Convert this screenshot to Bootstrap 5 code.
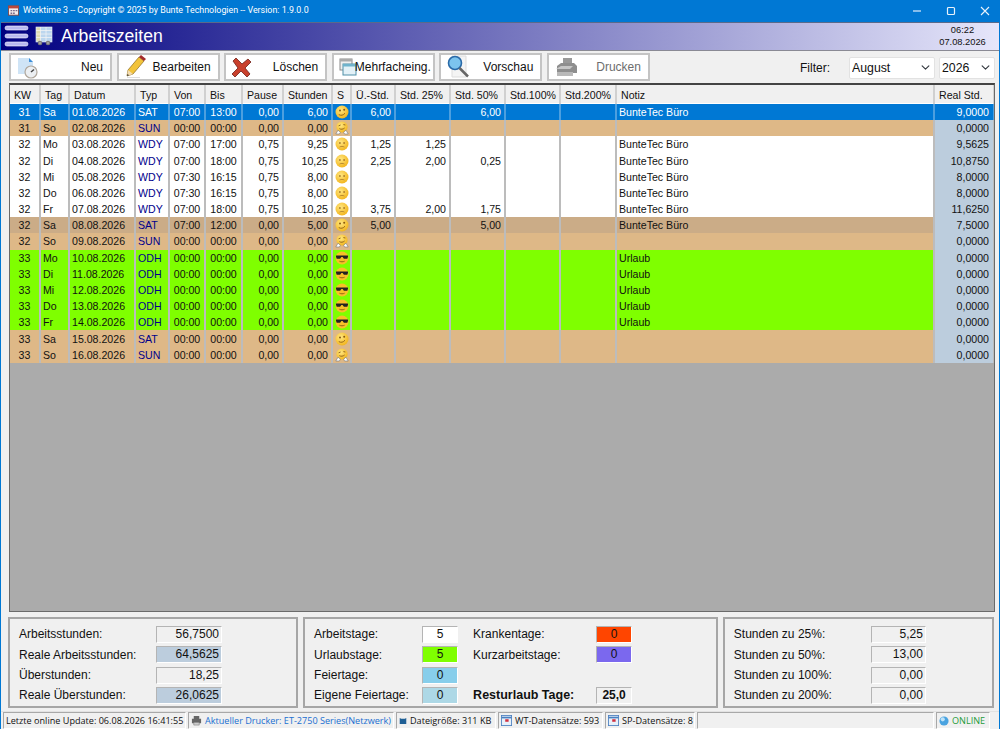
<!DOCTYPE html>
<html lang="de">
<head>
  <meta charset="UTF-8">
  <meta name="viewport" content="width=device-width, initial-scale=1.0">
  <title>Worktime 3</title>
  <link href="https://cdn.jsdelivr.net/npm/bootstrap@5.3.0/dist/css/bootstrap.min.css" rel="stylesheet">
  <style>
    html, body { height: 100%; overflow: hidden; }
    body { background: #f0f0f0; font-family: "Liberation Sans", Arial, sans-serif; font-size: 12px; color: #111; }
    .app-frame { height: 729px; border-left: 1px solid #0078d4; border-right: 1px solid #0078d4; }

    .title-bar { height: 22px; background: #0078d4; color: #fff; font-family: Roboto, sans-serif; font-size: 8.9px; font-variant-ligatures: none; margin: 0 -1px; padding-left: 8px; }
    .win-btns { width: 88px; padding-right: 10px; }
    .head-bar { height: 29px; background: linear-gradient(90deg, #000080 0%, #e6e6fa 100%); border-top: 1px solid #5a6a8a; border-bottom: 1px solid #8a8a94; padding-left: 3px; }
    .head-title { color: #fff; font-size: 17.6px; margin-left: 8px; }
    .cal-icon { margin-left: 6px; }
    .head-clock { font-size: 9.3px; line-height: 12.5px; text-align: center; width: 73px; color: #111; }

    .tool-bar { height: 32px; padding: 2px 4px 0 8px; }
    .tool-btn { width: 103px; height: 28px; padding: 0 7px 0 5px; border: 2px solid #c4c4c4; border-radius: 0; background: #fff; font-size: 12px; color: #111; margin-right: 4.6px; }
    .tool-btn:disabled { opacity: 1; background: #fff; border: 2px solid #c4c4c4; color: #6d6d6d; }
    .tool-btn.wide-text svg { margin-right: -2px; }
    .filter-wrap { height: 30px; }
    .filter-label { margin-right: 19px; }
    .filter-month { width: 86px; }
    .filter-year { width: 56px; }
    .filter-select { height: 22px; padding: 0 16px 0 2px; font-size: 12.3px; color: #111; border: 1px solid #e2e2e2; border-radius: 2px; background-position: right 4px center; background-size: 9px 9px; }

    .grid-box { height: 531px; margin: 0 4px 0 8px; background: #ababab; border: 1px solid #6a6a6a; border-top: 2px solid #444; overflow: hidden; }
    .table.work-table { table-layout: fixed; width: 984px; margin: 0; font-size: 10.6px; --bs-table-bg: transparent; border-collapse: collapse; color: #111; }
    .table.work-table > * > * > * { padding: 0 2px; border: 0; border-right: 2px solid #bcbcbc; height: 16.2px; line-height: 14px; white-space: nowrap; overflow: hidden; color: inherit; background: transparent; box-shadow: none; vertical-align: middle; }
    .table.work-table > thead > tr > th { background: #f0f0f0; height: 19px; font-weight: 400; border-right-color: #d0d0d0; border-bottom: 1px solid #fff; padding: 2px 0 0 4px; }
    .work-table tbody { background: #fff; }
    .table.work-table > tbody > tr > td.num { text-align: right; padding-right: 3px; }
    .table.work-table > tbody > tr > td.mid { text-align: center; }
    .table.work-table > tbody > tr > td.typ { color: #00008b; }
    .table.work-table > tbody > tr > td.real { background: #bccddd; padding-right: 4px; }
    .table.work-table > tbody > tr > td.face-cell { padding: 0; text-align: center; }
    .face-pic { display: block; width: 14px; height: 14px; margin: 0 auto; }
    .table.work-table > tbody > tr.row-sel > td { background: #0078d4; color: #fff; border-right-color: #4d9fdf; }
    .row-end { background: #deb887; }
    .row-dark { background: #cbac87; }
    .row-off { background: #7fff00; }

    .sum-area { height: 91px; margin: 5px 5px 0 7px; gap: 5px; }
    .sum-box { border: 2px solid #a6a6a6; padding: 5px 0 0 9px; display: grid; grid-auto-rows: 20.3px; align-items: center; }
    .box-a { width: 291px; grid-template-columns: 137px 66px; }
    .box-b { width: 416px; grid-template-columns: 108px 36px 15px 123px 36px; }
    .box-c { width: 272px; grid-template-columns: 137px 55px; }
    .sum-val { height: 17px; line-height: 15px; border: 1px solid; border-color: #b4b4b4 #fff #fff #b4b4b4; text-align: right; padding-right: 2px; font-size: 12px; }
    .sum-val.tint { background: #bccddd; }
    .day-val { height: 17px; line-height: 15px; border: 1px solid; border-color: #b4b4b4 #fff #fff #b4b4b4; text-align: center; font-size: 12px; }
    .sum-strong { font-weight: 700; font-size: 12.5px; white-space: nowrap; }

    .status-bar { height: 18px; margin-top: 3px; padding-left: 2px; gap: 2px; font-family: "Open Sans", sans-serif; font-size: 9.1px; background: #f0f0f0; border-top: 1px solid #e2e2e2; }
    .stat-cell { height: 17px; padding: 0 2px; border: 1px solid; border-color: #a8a8a8 #fff #fff #a8a8a8; white-space: nowrap; gap: 3px; }
    .stat-cell svg { flex-shrink: 0; }
    .stat-link { color: #1a6fd0; }
    .stat-online { color: #1f9c3a; }
  </style>
</head>
<body>

  <svg width="0" height="0" class="position-absolute">
    <defs>
      <radialGradient id="faceFill" cx="40%" cy="35%" r="70%"><stop offset="0" stop-color="#ffe680"/><stop offset="1" stop-color="#f2b318"/></radialGradient>
      <symbol id="fSmile" viewBox="0 0 14 14">
        <circle cx="7" cy="7" r="6.5" fill="url(#faceFill)"/>
        <circle cx="5" cy="5.5" r="1" fill="#8a5a10"/><circle cx="9.2" cy="4.8" r="1" fill="#8a5a10"/>
        <path d="M3.8 9.6c2 1.2 4.6.8 6.2-1.4" fill="none" stroke="#8a5a10" stroke-width=".9"/>
      </symbol>
      <symbol id="fHug" viewBox="0 0 14 14">
        <circle cx="7" cy="6" r="5.6" fill="url(#faceFill)"/>
        <path d="M3.6 4.8l2-.8M8.4 3.6l2 .4" stroke="#8a5a10" stroke-width=".9"/>
        <path d="M4.4 7.6c1.6 1 3.6.8 5.2-.6" fill="none" stroke="#8a5a10" stroke-width=".9"/>
        <path d="M.8 13l2.2-3.8 2.4 2-1 1.8zM13.2 13l-2.2-3.8-2.4 2 1 1.8z" fill="#fff" stroke="#777" stroke-width=".6"/>
      </symbol>
      <symbol id="fSad" viewBox="0 0 14 14">
        <circle cx="7" cy="7" r="6.5" fill="url(#faceFill)"/>
        <circle cx="4.9" cy="6" r=".9" fill="#a87a2a"/><circle cx="9.1" cy="6" r=".9" fill="#a87a2a"/>
        <path d="M4.6 10c1.4-.8 3.4-.8 4.8 0" fill="none" stroke="#a87a2a" stroke-width=".8"/>
      </symbol>
      <symbol id="fCool" viewBox="0 0 14 14">
        <circle cx="7" cy="7" r="6.5" fill="#f7c028"/>
        <path d="M1 4.6h12v1.2l-.7 2h-3.4l-1.3-1.7h-1.2L5.100 7.800H1.700L1 5.800z" fill="#222"/>
        <path d="M4.400 10.200c1.600.8 3.600.8 5.200 0" fill="none" stroke="#8a5a10" stroke-width=".9"/>
      </symbol>
    </defs>
  </svg>

  <div class="app-frame d-flex flex-column">

    <div class="title-bar d-flex align-items-center">
      <svg width="11" height="11" viewBox="0 0 13 13" class="flex-shrink-0"><rect x=".5" y="1" width="12" height="11" fill="#f4ecec" stroke="#7b3f3f"/><rect x=".5" y="1" width="12" height="3" fill="#b8483c"/><path d="M3 6h2v1.500H3zM6 6h2v1.500H6zM9 6h2v1.500H9zM3 9h2v1.500H3zM6 9h2v1.500H6z" fill="#7a6a8a"/></svg>
      <span class="ms-1">Worktime 3 -- Copyright © 2025 by Bunte Technologien -- Version: 1.9.0.0</span>
      <div class="win-btns ms-auto d-flex align-items-center justify-content-between">
        <svg width="10" height="10" viewBox="0 0 10 10"><path d="M1 5h8" stroke="#cfe4f7" stroke-width="1.300"/></svg>
        <svg width="10" height="10" viewBox="0 0 10 10"><rect x="1.500" y="1.500" width="7" height="7" rx="1" fill="none" stroke="#e8f2fb" stroke-width="1.200"/></svg>
        <svg width="10" height="10" viewBox="0 0 10 10"><path d="M1 1l8 8M9 1l-8 8" stroke="#e8f2fb" stroke-width="1.100"/></svg>
      </div>
    </div>

    <div class="head-bar d-flex align-items-center">
      <svg width="25" height="24" viewBox="0 0 25 24" class="flex-shrink-0">
        <g fill="#b9b9ef" stroke="#fff" stroke-width=".6"><rect x="1" y="2" width="23" height="4" rx="2"/><rect x="1" y="10" width="23" height="4" rx="2"/><rect x="1" y="18" width="23" height="4" rx="2"/></g>
      </svg>
      <svg width="18" height="20" viewBox="0 0 18 20" class="cal-icon flex-shrink-0">
        <rect x="1" y="1" width="16" height="15" fill="#bcd6ee" stroke="#eef4fa" stroke-width=".6"/>
        <rect x="1.500" y="1.500" width="4" height="14" fill="#e8dca0" opacity=".8"/>
        <path d="M1 4.500h16M1 8h16M1 11.500h16M5.500 1v15M11 1v15" stroke="#f5f5f5" stroke-width=".7"/>
        <circle cx="5" cy="17" r="2.300" fill="#7d7d7d"/><circle cx="13" cy="17" r="2.300" fill="#7d7d7d"/>
        <circle cx="5" cy="17" r=".8" fill="#ccc"/><circle cx="13" cy="17" r=".8" fill="#ccc"/>
      </svg>
      <span class="head-title">Arbeitszeiten</span>
      <div class="head-clock ms-auto">06:22<br>07.08.2026</div>
    </div>

    <div class="tool-bar d-flex align-items-start">
      <button class="btn tool-btn d-flex align-items-center justify-content-between">
        <svg width="24" height="24" viewBox="0 0 24 24"><path d="M2 3h11l4 4v12H2z" fill="#cfe4f6"/><path d="M13 3l4 4h-4z" fill="#3f8fd8"/><circle cx="15" cy="17" r="6" fill="#eceff2" stroke="#b0a79c" stroke-width="1.200"/><path d="M15 17l3-2.500" stroke="#444" stroke-width="1.500"/></svg>
        <span>Neu</span>
      </button>
      <button class="btn tool-btn d-flex align-items-center justify-content-between">
        <svg width="24" height="26" viewBox="0 0 24 26"><path d="M15 3l5 4-11 13-6 2 1-6z" fill="#f2c33a" stroke="#8a6a20" stroke-width=".7"/><path d="M15 3l2-2 5 4-2 2z" fill="#a32a2a"/><path d="M3 22l1-6 5 4z" fill="#f3dcb0"/><path d="M3 22l.5-2 1.500 1.200z" fill="#222"/><path d="M3 23.500h13" stroke="#ddd"/></svg>
        <span>Bearbeiten</span>
      </button>
      <button class="btn tool-btn d-flex align-items-center justify-content-between">
        <svg width="22" height="22" viewBox="0 0 22 22"><path d="M2 5l3-3 6 6 6-5 3 3-6 6 5 6-3 3-6-6-6 6-3-3 6-6z" fill="#c9402c" stroke="#6e2018" stroke-width=".8"/></svg>
        <span>Löschen</span>
      </button>
      <button class="btn tool-btn wide-text d-flex align-items-center justify-content-between">
        <svg width="18" height="20" viewBox="0 0 18 20" class="flex-shrink-0"><rect x="1" y="2" width="12" height="11" fill="#f0f0f0" stroke="#8a8a8a"/><rect x="1" y="2" width="12" height="2.500" fill="#aaa"/><rect x="4" y="7" width="13" height="11" fill="#e3f1f7" stroke="#4f8fa8"/><rect x="4" y="7" width="13" height="2.500" fill="#6fb3cc"/></svg>
        <span>Mehrfacheing.</span>
      </button>
      <button class="btn tool-btn d-flex align-items-center justify-content-between">
        <svg width="27" height="26" viewBox="0 0 27 26"><path d="M6 2h14v21H6z" fill="#f4f4f4" stroke="#ddd"/><circle cx="9" cy="9" r="6.500" fill="#7cc4ee" stroke="#2a6aa8" stroke-width="1.600"/><path d="M13.500 14l8.500 8.500" stroke="#666" stroke-width="2.500"/></svg>
        <span>Vorschau</span>
      </button>
      <button class="btn tool-btn d-flex align-items-center justify-content-between" disabled>
        <svg width="24" height="22" viewBox="0 0 24 22"><path d="M9 2h9v8H9z" fill="#999"/><path d="M3 10l4-3h13l3 3v7H3z" fill="#8e8e8e"/><path d="M2 13l5-3h12l-3 3z" fill="#c6c6c6"/><path d="M3 16h16v4H3z" fill="#b9b9b9"/></svg>
        <span>Drucken</span>
      </button>
      <div class="filter-wrap ms-auto d-flex align-items-center">
        <span class="filter-label">Filter:</span>
        <select class="form-select filter-select filter-month me-1"><option>August</option></select>
        <select class="form-select filter-select filter-year"><option>2026</option></select>
      </div>
    </div>

    <div class="grid-box">
      <table class="table work-table">
        <colgroup>
          <col style="width:30px"><col style="width:29px"><col style="width:66px"><col style="width:34px"><col style="width:36px"><col style="width:37px"><col style="width:41px"><col style="width:49px"><col style="width:19px"><col style="width:44px"><col style="width:55px"><col style="width:55px"><col style="width:55px"><col style="width:56px"><col style="width:318px"><col style="width:60px">
        </colgroup>
        <thead>
          <tr><th>KW</th><th>Tag</th><th>Datum</th><th>Typ</th><th>Von</th><th>Bis</th><th>Pause</th><th>Stunden</th><th>S</th><th>Ü.-Std.</th><th>Std. 25%</th><th>Std. 50%</th><th>Std.100%</th><th>Std.200%</th><th>Notiz</th><th>Real Std.</th></tr>
        </thead>
        <tbody id="workRows"></tbody>
      </table>
    </div>

    <div class="sum-area d-flex">
      <div class="sum-box box-a">
        <span>Arbeitsstunden:</span><div class="sum-val">56,7500</div>
        <span>Reale Arbeitsstunden:</span><div class="sum-val tint">64,5625</div>
        <span>Überstunden:</span><div class="sum-val">18,25</div>
        <span>Reale Überstunden:</span><div class="sum-val tint">26,0625</div>
      </div>
      <div class="sum-box box-b">
        <span>Arbeitstage:</span><div class="day-val bg-white">5</div><span></span><span>Krankentage:</span><div class="day-val" style="background:#ff4500">0</div>
        <span>Urlaubstage:</span><div class="day-val" style="background:#7fff00">5</div><span></span><span>Kurzarbeitstage:</span><div class="day-val" style="background:#7b68ee">0</div>
        <span>Feiertage:</span><div class="day-val" style="background:#87ceeb">0</div><span></span><span></span><span></span>
        <span>Eigene Feiertage:</span><div class="day-val" style="background:#add8e6">0</div><span></span><span class="sum-strong">Resturlaub Tage:</span><div class="day-val fw-bold">25,0</div>
      </div>
      <div class="sum-box box-c">
        <span>Stunden zu 25%:</span><div class="sum-val">5,25</div>
        <span>Stunden zu 50%:</span><div class="sum-val">13,00</div>
        <span>Stunden zu 100%:</span><div class="sum-val">0,00</div>
        <span>Stunden zu 200%:</span><div class="sum-val">0,00</div>
      </div>
    </div>

    <div class="status-bar d-flex align-items-center">
      <div class="stat-cell d-flex align-items-center" style="width:183px">Letzte online Update: 06.08.2026 16:41:55</div>
      <div class="stat-cell d-flex align-items-center stat-link" style="width:206px">
        <svg width="11" height="11" viewBox="0 0 12 12"><path d="M3 1h6v3H3zM1 4h10v5H1z" fill="#666"/><path d="M3 8h6v3H3z" fill="#ccc" stroke="#666" stroke-width=".5"/></svg>
        Aktueller Drucker: ET-2750 Series(Netzwerk)</div>
      <div class="stat-cell d-flex align-items-center" style="width:100px">
        <svg width="8" height="10" viewBox="0 0 11 12"><path d="M1 2l2 1h5l2-1v8H1z" fill="#1f5f95"/></svg>
        Dateigröße: 311 KB</div>
      <div class="stat-cell d-flex align-items-center" style="width:105px">
        <svg width="11" height="11" viewBox="0 0 13 13"><rect x=".5" y=".5" width="12" height="12" fill="#e6f0fa" stroke="#4a7fc0"/><path d="M.5 3h12" stroke="#4a7fc0" stroke-width="2"/><rect x="5" y="5" width="4" height="3" fill="#d03040"/></svg>
        WT-Datensätze: 593</div>
      <div class="stat-cell d-flex align-items-center" style="width:90px">
        <svg width="11" height="11" viewBox="0 0 13 13"><rect x=".5" y=".5" width="12" height="12" fill="#e6f0fa" stroke="#4a7fc0"/><path d="M.5 3h12" stroke="#4a7fc0" stroke-width="2"/><rect x="5" y="5" width="4" height="3" fill="#d03040"/></svg>
        SP-Datensätze: 8</div>
      <div class="stat-cell" style="width:237px"></div>
      <div class="stat-cell d-flex align-items-center stat-online" style="width:54px">
        <svg width="10" height="10" viewBox="0 0 12 12"><circle cx="6" cy="6" r="5.500" fill="#4aa3e0"/><circle cx="4.500" cy="4" r="2.500" fill="#bfe3f8"/></svg>
        ONLINE</div>
    </div>

  </div>

  <script>
    const offWork = ['00:00', '00:00', '0,00', '0,00'];
    const workDays = [
      ['31','Sa','01.08.2026','SAT','07:00','13:00','0,00','6,00','fSmile','6,00','','6,00','BunteTec Büro','9,0000','row-sel'],
      ['31','So','02.08.2026','SUN',...offWork,'fHug','','','','','0,0000','row-end'],
      ['32','Mo','03.08.2026','WDY','07:00','17:00','0,75','9,25','fSad','1,25','1,25','','BunteTec Büro','9,5625',''],
      ['32','Di','04.08.2026','WDY','07:00','18:00','0,75','10,25','fSad','2,25','2,00','0,25','BunteTec Büro','10,8750',''],
      ['32','Mi','05.08.2026','WDY','07:30','16:15','0,75','8,00','fSad','','','','BunteTec Büro','8,0000',''],
      ['32','Do','06.08.2026','WDY','07:30','16:15','0,75','8,00','fSad','','','','BunteTec Büro','8,0000',''],
      ['32','Fr','07.08.2026','WDY','07:00','18:00','0,75','10,25','fSad','3,75','2,00','1,75','BunteTec Büro','11,6250',''],
      ['32','Sa','08.08.2026','SAT','07:00','12:00','0,00','5,00','fSmile','5,00','','5,00','BunteTec Büro','7,5000','row-dark'],
      ['32','So','09.08.2026','SUN',...offWork,'fHug','','','','','0,0000','row-end'],
      ['33','Mo','10.08.2026','ODH',...offWork,'fCool','','','','Urlaub','0,0000','row-off'],
      ['33','Di','11.08.2026','ODH',...offWork,'fCool','','','','Urlaub','0,0000','row-off'],
      ['33','Mi','12.08.2026','ODH',...offWork,'fCool','','','','Urlaub','0,0000','row-off'],
      ['33','Do','13.08.2026','ODH',...offWork,'fCool','','','','Urlaub','0,0000','row-off'],
      ['33','Fr','14.08.2026','ODH',...offWork,'fCool','','','','Urlaub','0,0000','row-off'],
      ['33','Sa','15.08.2026','SAT',...offWork,'fSmile','','','','','0,0000','row-end'],
      ['33','So','16.08.2026','SUN',...offWork,'fHug','','','','','0,0000','row-end']
    ];

    document.getElementById('workRows').innerHTML = workDays.map(d => `
      <tr class="${d[14]}">
        <td class="mid">${d[0]}</td><td>${d[1]}</td><td>${d[2]}</td><td class="typ">${d[3]}</td>
        <td class="mid">${d[4]}</td><td class="mid">${d[5]}</td><td class="num">${d[6]}</td><td class="num">${d[7]}</td>
        <td class="face-cell"><svg class="face-pic"><use href="#${d[8]}"/></svg></td>
        <td class="num">${d[9]}</td><td class="num">${d[10]}</td><td class="num">${d[11]}</td><td></td><td></td>
        <td>${d[12]}</td><td class="num real">${d[13]}</td>
      </tr>`).join('');
  </script>

  <script src="https://cdn.jsdelivr.net/npm/bootstrap@5.3.0/dist/js/bootstrap.bundle.min.js"></script>
</body>
</html>
